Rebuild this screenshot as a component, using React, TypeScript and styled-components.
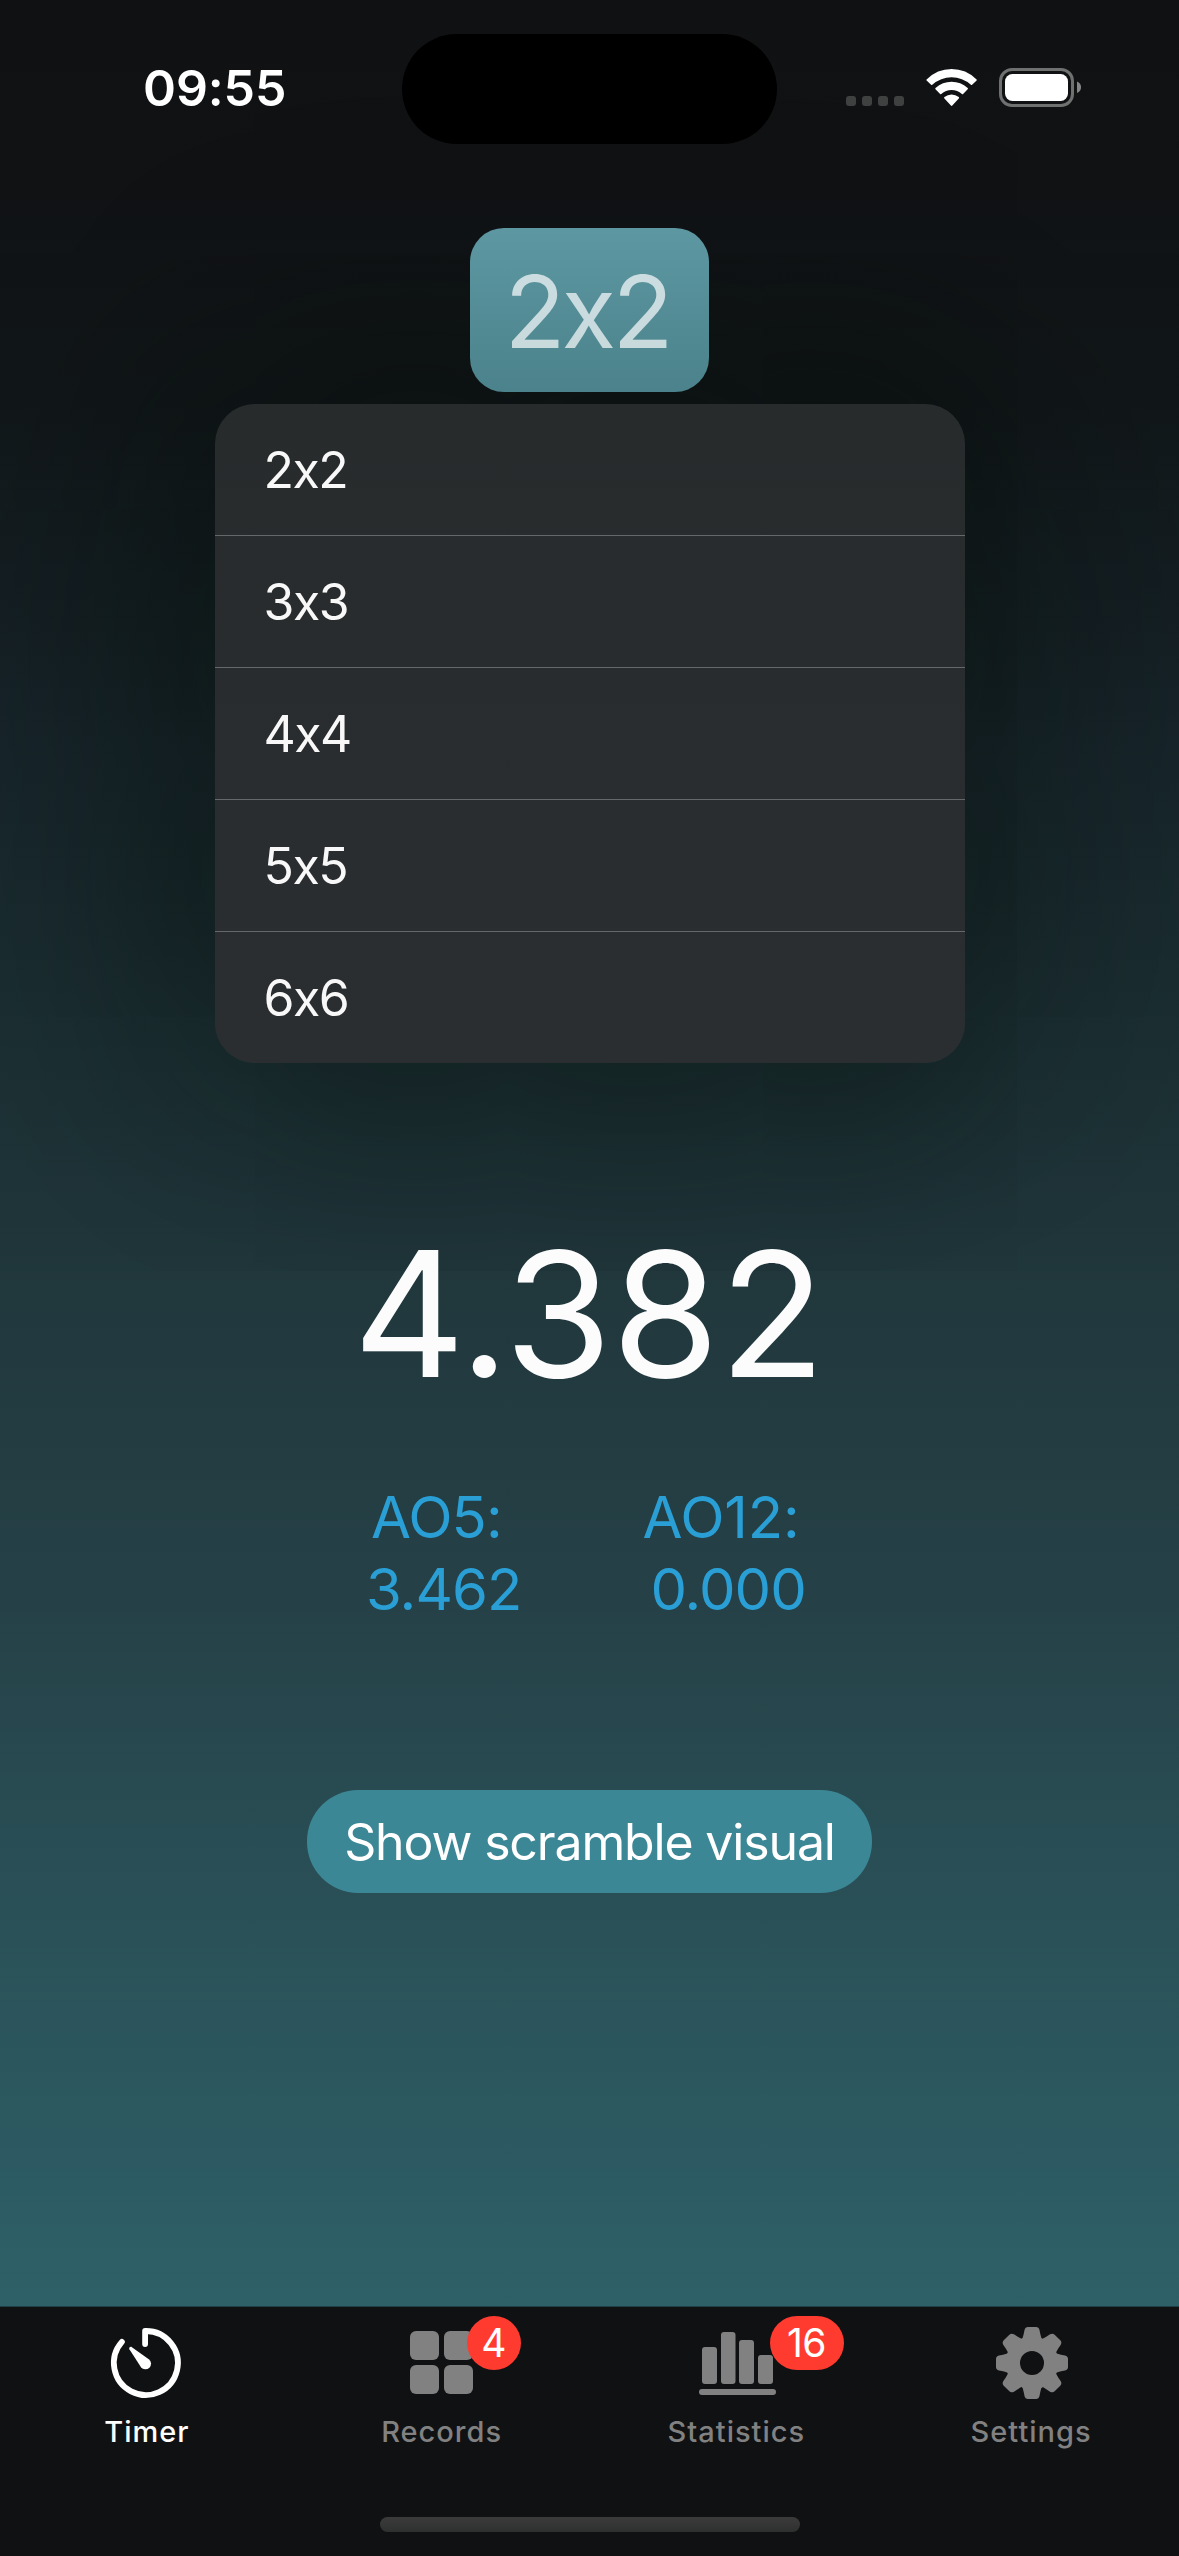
import React from "react";
import styled, { createGlobalStyle } from "styled-components";

const GlobalStyle = createGlobalStyle`
  * { box-sizing: border-box; }
  body { margin: 0; background: #101113; }
`;

const Screen = styled.main`
  width: 1179px;
  height: 2556px;
  overflow: hidden;
  display: flex;
  flex-direction: column;
  font-family: Inter, Roboto, sans-serif;
  color: #fff;
  background: #101113;
`;

const Stage = styled.section`
  height: 2307px;
  flex: none;
  display: flex;
  flex-direction: column;
  align-items: center;
  overflow: hidden;
  border-bottom: 1px solid #1f3f45;
  background: linear-gradient(180deg, #101113 0, #101214 180px, #111719 400px, #162328 700px, #1c3034 1063px, #21383d 1300px, #254147 1600px, #294d54 1840px, #2e6068 2306px);
`;

const StatusBar = styled.header`
  position: relative;
  z-index: 1;
  width: 100%;
  height: 228px;
  flex: none;
  display: grid;
  grid-template-columns: 402px 375px 402px;
  align-items: start;
`;

const Clock = styled.time`
  padding: 57px 0 0 143px;
  font-size: 50px;
  line-height: 62px;
  font-weight: 600;
  letter-spacing: -0.1px;
`;

const Island = styled.div`
  height: 110px;
  margin-top: 34px;
  border-radius: 55px;
  background: #000;
`;

const StatusIcons = styled.div`
  display: flex;
  align-items: flex-start;
  padding: 68px 0 0 69px;
`;

const Title = styled.button`
  position: relative;
  z-index: 1;
  width: 239px;
  height: 164px;
  flex: none;
  padding: 2px 5px 0 0;
  border: 0;
  border-radius: 34px;
  background: linear-gradient(#5d98a2, #4b828b);
  font: 400 100px/161px Inter, sans-serif;
  letter-spacing: -3.8px;
  color: rgba(255, 255, 255, 0.69);
`;

const Menu = styled.ul`
  width: 750px;
  height: 659px;
  flex: none;
  margin: 12px 0 0;
  padding: 0;
  list-style: none;
  border-radius: 40px;
  background: linear-gradient(#272b2c, #2a2e31);
  box-shadow: 0 0 270px 30px rgba(0, 8, 0, 0.64);
`;

const MenuItem = styled.li`
  height: 132px;
  padding: 1px 49px 0;
  border-bottom: 1px solid #64686a;
  font-size: 50px;
  line-height: 131px;
  letter-spacing: -1.5px;
  color: #f8f8f8;
  &:last-child { height: 131px; border-bottom: 0; }
`;

const Time = styled.div`
  margin-top: 145px;
  padding-right: 1px;
  height: 212px;
  font-size: 174px;
  line-height: 212px;
  letter-spacing: -0.2px;
  color: #fcfcfc;
`;

const Averages = styled.div`
  width: 440px;
  margin-top: 61px;
  margin-right: 7px;
  display: flex;
  justify-content: space-between;
  color: #2a9fd6;
  font-size: 58px;
  line-height: 72px;
  letter-spacing: -0.9px;
`;

const Average = styled.div`
  display: flex;
  flex-direction: column;
  white-space: nowrap;
`;

const AverageText = styled.span<{ $indent?: number; $tracking?: number }>`
  padding-left: ${(p) => p.$indent ?? 0}px;
  letter-spacing: ${(p) => p.$tracking ?? -0.9}px;
`;

const ScrambleButton = styled.button`
  width: 565px;
  height: 103px;
  margin-top: 165px;
  padding: 1px 0 0;
  border: 0;
  border-radius: 51px;
  background: #3c8795;
  color: #fff;
  font: 400 50px/102px Inter, sans-serif;
  letter-spacing: -1.15px;
`;

const TabBar = styled.nav`
  height: 210px;
  flex: none;
  display: grid;
  grid-template-columns: repeat(4, 1fr);
`;

const Tab = styled.a<{ $active?: boolean }>`
  display: flex;
  flex-direction: column;
  align-items: center;
  padding-top: 16px;
  color: ${(p) => (p.$active ? "#fff" : "#818181")};
`;

const TabIcon = styled.span`
  position: relative;
  width: 80px;
  height: 80px;
  svg { display: block; }
`;

const TabLabel = styled.span`
  margin-top: 11px;
  padding-right: 1px;
  font-size: 29px;
  line-height: 36px;
  font-weight: 500;
  letter-spacing: 1px;
`;

const Badge = styled.b<{ $wide?: boolean }>`
  position: absolute;
  left: ${(p) => (p.$wide ? 73 : 65)}px;
  top: -7px;
  width: ${(p) => (p.$wide ? 74 : 54)}px;
  height: 54px;
  padding-right: 1px;
  border-radius: 27px;
  background: #ff3b30;
  color: #fff;
  font-size: 39px;
  font-weight: 400;
  line-height: 54px;
  text-align: center;
  letter-spacing: -0.6px;
`;

const HomeIndicator = styled.div`
  align-self: center;
  width: 420px;
  height: 15px;
  flex: none;
  border-radius: 8px;
  background: linear-gradient(#3b3b3b, #2e302f);
`;

function DeviceStatus() {
  return (
    <svg width="240" height="42" viewBox="846 68 240 42">
      {[846, 862, 878, 894].map((x) => (
        <rect key={x} x={x} y="96" width="10" height="10" rx="3" fill="#3f4141" />
      ))}
      <path fill="#fff" d="M951.6 69Q966 69 976.6 79.4Q977.2 80 976.6 80.6L972.1 84.8Q971.5 85.4 970.9 84.8Q962.5 77.2 951.6 77.2Q940.7 77.2 932.3 84.8Q931.7 85.4 931.1 84.8L926.6 80.6Q926 80 926.6 79.4Q937.2 69 951.6 69Z" />
      <path fill="#fff" d="M951.6 81.7Q960.7 81.7 967.7 88.1Q968.3 88.7 967.7 89.3L963.1 93.9Q962.5 94.5 961.9 93.9Q957.5 89.9 951.6 89.9Q945.7 89.9 941.3 93.9Q940.7 94.5 940.1 93.9L935.5 89.3Q934.9 88.7 935.5 88.1Q942.5 81.7 951.6 81.7Z" />
      <path fill="#fff" d="M951.6 94.4Q955.5 94.4 958.8 97.1Q959.5 97.8 958.8 98.5L952.3 105.6Q951.6 106.3 950.9 105.6L944.4 98.5Q943.7 97.8 944.4 97.1Q947.7 94.4 951.6 94.4Z" />
      <rect x="1000.5" y="69.5" width="72" height="36" rx="11.5" fill="none" stroke="#6f7070" strokeWidth="3" />
      <rect x="1005" y="74" width="63" height="27" rx="7.5" fill="#fff" />
      <path d="M1077 81.5Q1081 83 1081 87.3Q1081 91.5 1077 93Z" fill="#858686" />
    </svg>
  );
}

function TimerIcon() {
  return (
    <svg width="80" height="80" viewBox="107.4 2323 80 80">
      <path d="M145.5 2344V2331H146A32 32 0 1 1 122.3 2341.8" fill="none" stroke="currentColor" strokeWidth="5.8" strokeLinecap="round" strokeLinejoin="round" />
      <path d="M132.3 2347.2L149.2 2359.3A5.6 5.6 0 1 1 141.4 2367.2L129.8 2349.3C128.9 2347.6 130.8 2346.2 132.3 2347.2Z" fill="currentColor" />
    </svg>
  );
}

function RecordsIcon() {
  return (
    <svg width="80" height="80" viewBox="402 2323 80 80" fill="currentColor">
      <rect x="410" y="2331" width="29" height="29" rx="6" />
      <rect x="444" y="2331" width="29" height="29" rx="6" />
      <rect x="410" y="2365" width="29" height="29" rx="6" />
      <rect x="444" y="2365" width="29" height="29" rx="6" />
    </svg>
  );
}

function StatisticsIcon() {
  return (
    <svg width="80" height="80" viewBox="697 2323 80 80" fill="currentColor">
      <rect x="702" y="2347" width="15" height="37" rx="3" />
      <rect x="721" y="2332" width="14.5" height="52" rx="3" />
      <rect x="739" y="2340" width="15" height="44" rx="3" />
      <rect x="758" y="2355" width="15" height="29" rx="3" />
      <rect x="699" y="2389" width="77" height="6" rx="3" />
    </svg>
  );
}

function SettingsIcon() {
  return (
    <svg width="80" height="80" viewBox="-40 -40 80 80">
      <g fill="currentColor">
        {[0, 45, 90, 135, 180, 225, 270, 315].map((angle) => (
          <path key={angle} transform={`rotate(${angle})`} d="M-11 -22Q-9.3 -24 -8.3 -29L-7.5 -33Q-6.8 -36 -4 -36H4Q6.8 -36 7.5 -33L8.3 -29Q9.3 -24 11 -22L6 -16H-6Z" />
        ))}
      </g>
      <circle r="19.2" fill="none" stroke="currentColor" strokeWidth="14.4" />
    </svg>
  );
}

const sizes = ["2x2", "3x3", "4x4", "5x5", "6x6"];

export default function App() {
  return (
    <>
      <GlobalStyle />
      <Screen>
        <Stage>
          <StatusBar>
            <Clock>09:55</Clock>
            <Island />
            <StatusIcons><DeviceStatus /></StatusIcons>
          </StatusBar>
          <Title>2x2</Title>
          <Menu>{sizes.map((size) => <MenuItem key={size}>{size}</MenuItem>)}</Menu>
          <Time>4.382</Time>
          <Averages>
            <Average>
              <AverageText $indent={5}>AO5:</AverageText>
              <AverageText>3.462</AverageText>
            </Average>
            <Average>
              <AverageText $tracking={-0.2}>AO12:</AverageText>
              <AverageText $indent={8}>0.000</AverageText>
            </Average>
          </Averages>
          <ScrambleButton>Show scramble visual</ScrambleButton>
        </Stage>
        <TabBar>
          <Tab $active><TabIcon><TimerIcon /></TabIcon><TabLabel>Timer</TabLabel></Tab>
          <Tab><TabIcon><RecordsIcon /><Badge>4</Badge></TabIcon><TabLabel>Records</TabLabel></Tab>
          <Tab><TabIcon><StatisticsIcon /><Badge $wide>16</Badge></TabIcon><TabLabel>Statistics</TabLabel></Tab>
          <Tab><TabIcon><SettingsIcon /></TabIcon><TabLabel>Settings</TabLabel></Tab>
        </TabBar>
        <HomeIndicator />
      </Screen>
    </>
  );
}
